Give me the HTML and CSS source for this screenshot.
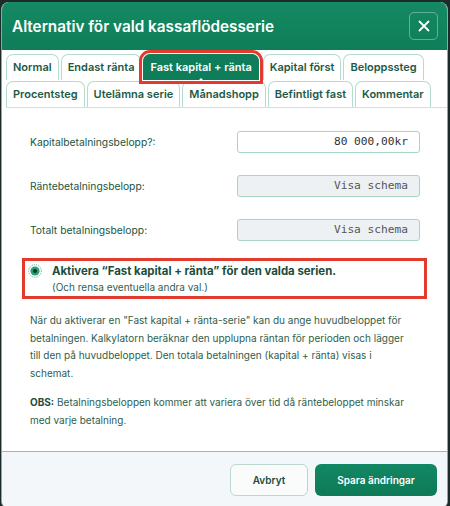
FILE: index.html
```html
<!DOCTYPE html>
<html>
<head>
<meta charset="utf-8">
<link rel="stylesheet" href="styles.css">
</head>
<body>
<div class="modal">
	<div class="modal-header">
		<h2>Alternativ för vald kassaflödesserie</h2>
		<button class="close-btn" aria-label="Stäng">
			<svg width="12" height="12" viewBox="0 0 12 12"><path d="M1.5 1.5 L10.5 10.5 M10.5 1.5 L1.5 10.5" stroke="#fff" stroke-width="1.8" stroke-linecap="round"/></svg>
		</button>
	</div>
	<div class="tabs">
		<div class="tab">Normal</div>
		<div class="tab">Endast ränta</div>
		<div class="tab active">Fast kapital + ränta</div>
		<div class="tab">Kapital först</div>
		<div class="tab">Beloppssteg</div>
		<div class="tab">Procentsteg</div>
		<div class="tab">Utelämna serie</div>
		<div class="tab">Månadshopp</div>
		<div class="tab">Befintligt fast</div>
		<div class="tab">Kommentar</div>
	</div>
	<div class="modal-body">
		<div class="form-row">
			<label>Kapitalbetalningsbelopp?:</label>
			<input class="amount" type="text" value="80 000,00kr">
		</div>
		<div class="form-row">
			<label>Räntebetalningsbelopp:</label>
			<input class="amount readonly" type="text" value="Visa schema" readonly>
		</div>
		<div class="form-row">
			<label>Totalt betalningsbelopp:</label>
			<input class="amount readonly" type="text" value="Visa schema" readonly>
		</div>

		<div class="activate">
			<svg class="radio" width="14" height="14" viewBox="0 0 14 14">
				<circle cx="7" cy="7" r="6.3" fill="none" stroke="#3a8f70" stroke-width="0.8" stroke-dasharray="1 1"/>
				<circle cx="7" cy="7" r="4.6" fill="#26a078"/>
				<circle cx="7" cy="7" r="2" fill="#0d2f24"/>
			</svg>
			<div>
				<div class="activate-title">Aktivera “Fast kapital + ränta” för den valda serien.</div>
				<div class="activate-sub">(Och rensa eventuella andra val.)</div>
			</div>
		</div>

		<p class="info">När du aktiverar en "Fast kapital + ränta-serie" kan du ange huvudbeloppet för betalningen. Kalkylatorn beräknar den upplupna räntan för perioden och lägger till den på huvudbeloppet. Den totala betalningen (kapital + ränta) visas i schemat.</p>
		<p class="info obs"><b>OBS:</b> Betalningsbeloppen kommer att variera över tid då räntebeloppet minskar med varje betalning.</p>
	</div>
	<div class="modal-footer">
		<button class="btn btn-cancel">Avbryt</button>
		<button class="btn btn-save">Spara ändringar</button>
	</div>
</div>
</body>
</html>
```

FILE: styles.css
```css
body {
	margin: 0;
	background: #1c2b29;
	font-family: Inter, "Noto Sans", sans-serif;
}
.modal {
	margin: 2px 2px 0 1px;
	height: 506px;
	background: #fff;
	border: 1px solid #9aa3a3;
	border-top: none;
	border-radius: 8px;
	overflow: hidden;
	display: flex;
	flex-direction: column;
}
/* header */
.modal-header {
	flex-shrink: 0;
	height: 48px;
	padding: 0 9px 0 10px;
	display: flex;
	align-items: center;
	justify-content: space-between;
	background: linear-gradient(180deg, #148a63, #0f7d59);
}
.modal-header h2 {
	margin: 0;
	color: #fff;
	font-size: 15.3px;
	font-weight: 600;
}
.close-btn {
	width: 29px;
	height: 28px;
	padding: 0;
	display: flex;
	align-items: center;
	justify-content: center;
	background: transparent;
	border: 1px solid rgba(255,255,255,0.35);
	border-radius: 5px;
}
/* tabs */
.tabs {
	flex-shrink: 0;
	margin: 4px 0 0 4px;
	display: flex;
	flex-wrap: wrap;
	column-gap: 2px;
	row-gap: 1px;
	border-bottom: 1px solid #cfe3db;
	width: 441px;
}
.tab {
	padding: 5px 6px 5px;
	font-size: 11px;
	font-weight: 600;
	line-height: 15px;
	color: #1d5a45;
	border: 1px solid #b2ddcc;
	border-bottom: none;
	border-radius: 7px 7px 0 0;
	background: #fff;
}
.tab.active {
	position: relative;
	margin-right: 2px;
	background: #0f7d5a;
	border-color: #0f7d5a;
	color: #fff;
	outline: 3px solid #e23b2e;
	outline-offset: 1px;
	z-index: 1;
}
.tab.active::after {
	content: "";
	position: absolute;
	left: 50%;
	bottom: -1px;
	margin-left: -3px;
	border: 3px solid transparent;
	border-bottom-color: #fff;
	border-top: none;
}
/* body */
.modal-body {
	flex: 1;
	padding: 22px 26px 0 28px;
}
.form-row {
	display: flex;
	align-items: center;
	justify-content: space-between;
	height: 23px;
	padding-right: 1px;
}
.form-row + .form-row {
	margin-top: 21px;
}
.form-row label {
	font-size: 10.3px;
	color: #1b5540;
}
.amount {
	width: 183px;
	height: 22px;
	box-sizing: border-box;
	padding: 0 11px;
	border: 1px solid #a6d5c3;
	border-radius: 3px;
	text-align: right;
	font-family: "DejaVu Sans Mono", monospace;
	font-size: 11.2px;
	color: #333;
	background: #fff;
}
.amount.readonly {
	background: #edf1f4;
	color: #555;
}
.activate {
	margin: 17px -6px 0 -8px;
	height: 41px;
	box-sizing: border-box;
	border: 3px solid #e23b2e;
	display: flex;
	align-items: flex-start;
	padding: 2px 0 0 3px;
}
.radio {
	margin: 1px 10px 0 0;
}
.activate-title {
	font-size: 11.4px;
	font-weight: 700;
	color: #1b4d3b;
	line-height: 16px;
}
.activate-sub {
	font-size: 10px;
	color: #2f5f4d;
	line-height: 17px;
}
.info {
	margin: 13px 0 0;
	width: 380px;
	font-size: 10px;
	line-height: 17.5px;
	color: #2f5e4c;
}
.info.obs {
	margin-top: 12px;
}
.info b {
	color: #1b4d3b;
}
/* footer */
.modal-footer {
	flex-shrink: 0;
	height: 57px;
	box-sizing: border-box;
	padding: 12px 10px 0 0;
	border-top: 1px solid #a9b2b2;
	background: #f4f7f9;
	display: flex;
	justify-content: flex-end;
	align-items: flex-start;
	gap: 7px;
}
.btn {
	height: 32px;
	font-family: Inter, "Noto Sans", sans-serif;
	font-size: 10px;
	font-weight: 600;
	border-radius: 6px;
}
.btn-cancel {
	width: 78px;
	background: #fafcfc;
	border: 1px solid #bcd7cc;
	color: #1d4d3c;
}
.btn-save {
	width: 122px;
	background: linear-gradient(180deg, #128763, #0e7a57);
	border: none;
	color: #fff;
}
```
